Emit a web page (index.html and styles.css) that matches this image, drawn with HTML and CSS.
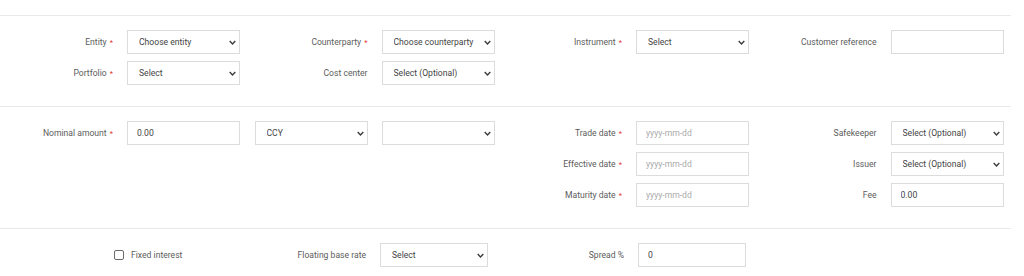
FILE: index.html
```html
<!DOCTYPE html>
<html lang="en">
<head>
    <meta charset="UTF-8">
    <meta name="viewport" content="width=device-width, initial-scale=1.0">
    <title>New trade</title>
    <link rel="stylesheet" href="styles.css">
</head>
<body>

    <form class="trade-form">
        <!-- General -->
        <div class="section">
            <div class="field">
                <label>Entity <span class="req">*</span></label>
                <div class="select-wrap">
                    <select><option>Choose entity</option></select>
                    <svg class="chevron" viewBox="0 0 10 6"><path d="M1 1l4 4 4-4"/></svg>
                </div>
            </div>
            <div class="field">
                <label>Counterparty <span class="req">*</span></label>
                <div class="select-wrap">
                    <select><option>Choose counterparty</option></select>
                    <svg class="chevron" viewBox="0 0 10 6"><path d="M1 1l4 4 4-4"/></svg>
                </div>
            </div>
            <div class="field">
                <label>Instrument <span class="req">*</span></label>
                <div class="select-wrap">
                    <select><option>Select</option></select>
                    <svg class="chevron" viewBox="0 0 10 6"><path d="M1 1l4 4 4-4"/></svg>
                </div>
            </div>
            <div class="field">
                <label>Customer reference</label>
                <input type="text">
            </div>

            <div class="field">
                <label>Portfolio <span class="req">*</span></label>
                <div class="select-wrap">
                    <select><option>Select</option></select>
                    <svg class="chevron" viewBox="0 0 10 6"><path d="M1 1l4 4 4-4"/></svg>
                </div>
            </div>
            <div class="field">
                <label>Cost center</label>
                <div class="select-wrap">
                    <select><option>Select (Optional)</option></select>
                    <svg class="chevron" viewBox="0 0 10 6"><path d="M1 1l4 4 4-4"/></svg>
                </div>
            </div>
        </div>

        <!-- Amounts and dates -->
        <div class="section">
            <div class="field">
                <label>Nominal amount <span class="req">*</span></label>
                <input type="text" value="0.00">
            </div>
            <div class="field">
                <div class="select-wrap">
                    <select><option>CCY</option></select>
                    <svg class="chevron" viewBox="0 0 10 6"><path d="M1 1l4 4 4-4"/></svg>
                </div>
                <div class="select-wrap">
                    <select><option></option></select>
                    <svg class="chevron" viewBox="0 0 10 6"><path d="M1 1l4 4 4-4"/></svg>
                </div>
            </div>
            <div class="field">
                <label>Trade date <span class="req">*</span></label>
                <input type="text" placeholder="yyyy-mm-dd">
            </div>
            <div class="field">
                <label>Safekeeper</label>
                <div class="select-wrap">
                    <select><option>Select (Optional)</option></select>
                    <svg class="chevron" viewBox="0 0 10 6"><path d="M1 1l4 4 4-4"/></svg>
                </div>
            </div>

            <div></div>
            <div></div>
            <div class="field">
                <label>Effective date <span class="req">*</span></label>
                <input type="text" placeholder="yyyy-mm-dd">
            </div>
            <div class="field">
                <label>Issuer</label>
                <div class="select-wrap">
                    <select><option>Select (Optional)</option></select>
                    <svg class="chevron" viewBox="0 0 10 6"><path d="M1 1l4 4 4-4"/></svg>
                </div>
            </div>

            <div></div>
            <div></div>
            <div class="field">
                <label>Maturity date <span class="req">*</span></label>
                <input type="text" placeholder="yyyy-mm-dd">
            </div>
            <div class="field">
                <label>Fee</label>
                <input type="text" value="0.00">
            </div>
        </div>

        <!-- Interest -->
        <div class="section interest">
            <div class="check-field">
                <input type="checkbox" id="fixedInterest">
                <label for="fixedInterest">Fixed interest</label>
            </div>
            <div class="field">
                <label>Floating base rate</label>
                <div class="select-wrap">
                    <select><option>Select</option></select>
                    <svg class="chevron" viewBox="0 0 10 6"><path d="M1 1l4 4 4-4"/></svg>
                </div>
            </div>
            <div class="field">
                <label>Spread %</label>
                <input type="text" value="0">
            </div>
        </div>
    </form>

</body>
</html>
```

FILE: styles.css
```css
body {
    font-family: Roboto, "Liberation Sans", Arial, sans-serif;
    font-size: 8.6px;
    color: #5c5c5c;
    background-color: white;
    margin: 0;
    padding: 15px 0 0 0;
}

.trade-form {
    width: 1011px;
}

.section {
    display: grid;
    grid-template-columns: repeat(4, 254.5px);
    row-gap: 7px;
    border-top: 1px solid #e8e8e8;
    padding: 14px 0 21px 0;
}

.field {
    display: grid;
    grid-template-columns: 1fr 113px;
    column-gap: 14px;
    align-items: center;
    padding-right: 14.5px;
}

.field label {
    text-align: right;
    white-space: nowrap;
    color: #5c5c5c;
}

.req {
    color: #e3342f;
    font-size: 7.5px;
    margin-left: 1px;
}

.field input,
.field select {
    box-sizing: border-box;
    width: 100%;
    height: 24px;
    margin: 0;
    border: 1px solid #dcdcdc;
    border-radius: 0;
    background: white;
    font-family: inherit;
    font-size: 8.6px;
    color: #444;
    outline: none;
}

.field input {
    padding: 0 9px;
}

.field input::placeholder {
    color: #aaa;
}

.field select {
    appearance: none;
    -webkit-appearance: none;
    padding: 0 18px 0 11px;
}

.select-wrap {
    position: relative;
}

.chevron {
    position: absolute;
    right: 4px;
    top: 10px;
    width: 7px;
    height: 5px;
    fill: none;
    stroke: #3a3a3a;
    stroke-width: 2;
    pointer-events: none;
}

/* last section is laid out on a wider pitch */
.interest {
    grid-template-columns: 250px 258px 258px;
}

.interest .field {
    grid-template-columns: 1fr 108px;
    padding-right: 20px;
}

.check-field {
    display: flex;
    align-items: center;
    padding-left: 114px;
    gap: 7px;
}

.check-field input {
    appearance: none;
    -webkit-appearance: none;
    box-sizing: border-box;
    width: 10px;
    height: 10px;
    margin: 0;
    border: 1px solid #6a6a6a;
    border-radius: 2px;
    background: white;
}

.check-field label {
    color: #5c5c5c;
}
```
